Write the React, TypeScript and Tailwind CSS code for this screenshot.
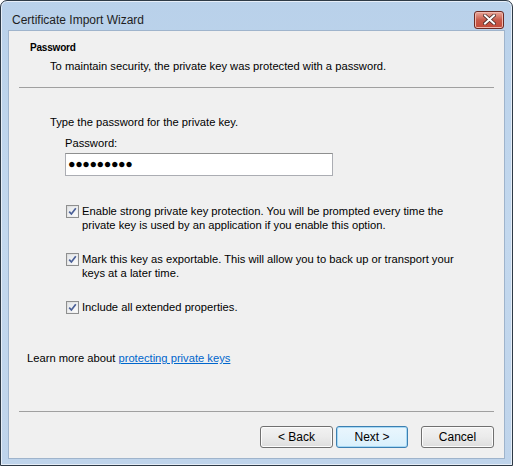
import { useState } from 'react'

// Windows 7 style "Certificate Import Wizard" password page

function CheckBox({ checked }: { checked: boolean }) {
  return (
    <span className="mt-[1px] flex h-[13px] w-[13px] shrink-0 items-center justify-center border border-[#8e8f8f] bg-gradient-to-br from-[#dcdcdc] to-[#f6f6f6]">
      <span className="flex h-[9px] w-[9px] items-center justify-center bg-gradient-to-br from-[#e4e7ea] to-[#fbfbfb]">
        {checked && (
          <svg width="9" height="9" viewBox="0 0 9 9">
            <path d="M1.2 4.6 L3.4 7 L7.8 1.3" fill="none" stroke="#4a5f97" strokeWidth="1.7" />
          </svg>
        )}
      </span>
    </span>
  )
}

function Option({ lines, checked }: { lines: string[]; checked: boolean }) {
  return (
    <label className="flex items-start gap-[3px]">
      <CheckBox checked={checked} />
      <span className="leading-[14px]">
        {lines.map((l, i) => (
          <span key={i} className="block whitespace-nowrap">
            {l}
          </span>
        ))}
      </span>
    </label>
  )
}

function WizardButton({ label, focused, width = 'w-[73px]' }: { label: string; focused?: boolean; width?: string }) {
  return (
    <button
      className={`h-[22px] ${width} rounded-[3px] border text-[12px] ${
        focused
          ? 'border-[#3c7fb1] bg-gradient-to-b from-[#eaf6fd] to-[#d9f0fc] shadow-[inset_0_0_0_1px_#a7d9f5]'
          : 'border-[#707070] bg-gradient-to-b from-[#f2f2f2] via-[#ebebeb] to-[#dddddd] shadow-[inset_0_0_0_1px_#fcfcfc]'
      }`}
    >
      {label}
    </button>
  )
}

export default function App() {
  const [options] = useState([
    {
      lines: [
        'Enable strong private key protection. You will be prompted every time the',
        'private key is used by an application if you enable this option.',
      ],
      checked: true,
    },
    {
      lines: [
        'Mark this key as exportable. This will allow you to back up or transport your',
        'keys at a later time.',
      ],
      checked: true,
    },
    { lines: ['Include all extended properties.'], checked: true },
  ])

  return (
    <div className="h-[466px] w-[513px] font-['Liberation_Sans',Arial,sans-serif] text-[11.2px] text-black">
      <div className="flex h-full flex-col rounded-t-[7px] border border-[#2e3a46] bg-gradient-to-b from-[#b9d1ea] via-[#c3d8ee] to-[#bfd4eb] px-[7px] pb-[6px] shadow-[inset_0_0_0_1px_#e6eef8]">
        {/* title bar */}
        <div className="flex h-[29px] shrink-0 items-center justify-between pt-[8px]">
          <span className="pl-[4px] text-[12px] text-[#1e1e1e]">Certificate Import Wizard</span>
          <span className="mr-[1px] flex h-[18px] w-[30px] items-center justify-center rounded-[3px] border border-[#6d2a22] bg-gradient-to-b from-[#e9a99c] via-[#c75a4a] to-[#c24a38] shadow-[inset_0_0_0_1px_#f0b8ae]">
            <svg width="13" height="11" viewBox="0 0 13 11">
              <path d="M2 1.5 L11 9.5 M11 1.5 L2 9.5" stroke="#4a2a26" strokeWidth="3.6" strokeLinecap="square" />
              <path d="M2 1.5 L11 9.5 M11 1.5 L2 9.5" stroke="#ffffff" strokeWidth="2" strokeLinecap="square" />
            </svg>
          </span>
        </div>

        {/* client area */}
        <div className="flex flex-1 flex-col border border-[#9fb4cc] bg-[#f0f0f0]">
          {/* header */}
          <div className="px-[21px] pt-[10px]">
            <div className="text-[10px] font-bold leading-[14px] tracking-[-0.2px]">Password</div>
            <div className="mt-[4px] pl-[20px] leading-[14px]">
              To maintain security, the private key was protected with a password.
            </div>
          </div>
          <div className="mx-[10px] mt-[14px] h-[2px] border-t border-[#a0a0a0] border-b-white" />

          {/* body */}
          <div className="flex flex-1 flex-col pl-[41px] pr-[20px] pt-[26px]">
            <div className="leading-[14px]">Type the password for the private key.</div>
            <div className="mt-[7px] pl-[15px] leading-[14px]">Password:</div>
            <div className="ml-[15px] mt-[3px] flex h-[23px] w-[268px] items-center border border-[#abadb3] border-t-[#8e8f8f] bg-white pl-[2px] text-[12.5px] tracking-[-0.4px]">
              ●●●●●●●●●
            </div>

            <div className="mt-[28px] flex flex-col gap-[20px] pl-[16px]">
              {options.map(o => (
                <Option key={o.lines[0]} lines={o.lines} checked={o.checked} />
              ))}
            </div>

            <div className="ml-[-23px] mt-[37px] leading-[14px]">
              Learn more about{' '}
              <a href="#" className="text-[#0066cc] underline">
                protecting private keys
              </a>
            </div>
          </div>

          {/* footer */}
          <div className="mx-[10px] h-[2px] border-t border-[#a0a0a0] border-b-white" />
          <div className="flex justify-end pb-[10px] pr-[10px] pt-[13px]">
            <WizardButton label="< Back" />
            <span className="w-[3px]" />
            <WizardButton label="Next >" focused width="w-[72px]" />
            <span className="w-[13px]" />
            <WizardButton label="Cancel" />
          </div>
        </div>
      </div>
    </div>
  )
}
